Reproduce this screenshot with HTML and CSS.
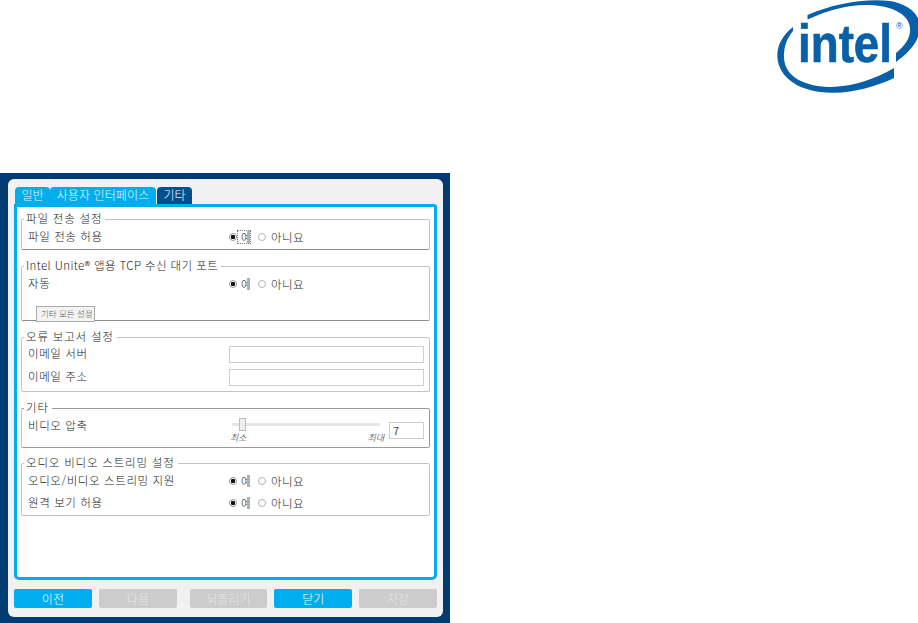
FILE: index.html
```html
<!DOCTYPE html>
<html lang="ko">
<head>
    <meta charset="UTF-8">
    <meta name="viewport" content="width=device-width, initial-scale=1.0">
    <title>Intel Unite</title>
    <link rel="stylesheet" href="styles.css">
</head>
<body>

<header class="top">
    <svg class="logo" width="148" height="110" viewBox="0 0 148 110">
        <path d="M37.5 15 C62 4 95 -2 120 1 C138 4 150 14 150 27 C150 40 140 52 126 62 L126 53 C135 46 141 37 140 28 C139 14 122 6 100 5 C80 4 58 10 37.5 19.5 Z"/>
        <path d="M23 27 C13 35 7 45 7.3 56 C8 78 30 92.7 62 92.7 C85 93 107 86 124 78 L124 68 C105 79 85 86 62 87 C35 87 15 77 14 58 C13.5 47 17 38 23 31 Z"/>
        <text class="logo-word" x="28" y="62" textLength="94" lengthAdjust="spacingAndGlyphs">intel</text>
        <text class="logo-reg" x="126" y="29">®</text>
    </svg>
</header>

<div class="window">
    <div class="panel">
        <div class="tabs">
            <div class="tab">일반</div>
            <div class="tab wide">사용자 인터페이스</div>
            <div class="tab active">기타</div>
        </div>

        <div class="content">
            <fieldset class="group group-file">
                <legend>파일 전송 설정</legend>
                <div class="row">
                    <label>파일 전송 허용</label>
                    <div class="choice">
                        <input type="radio" name="r1" checked><span class="yes focused">예</span>
                        <input type="radio" name="r1"><span>아니요</span>
                    </div>
                </div>
            </fieldset>

            <fieldset class="group group-port">
                <legend>Intel Unite® 앱용 TCP 수신 대기 포트</legend>
                <div class="row">
                    <label>자동</label>
                    <div class="choice">
                        <input type="radio" name="r2" checked><span class="yes">예</span>
                        <input type="radio" name="r2"><span>아니요</span>
                    </div>
                </div>
                <div class="tooltip">기타 모든 설정</div>
            </fieldset>

            <fieldset class="group group-report">
                <legend>오류 보고서 설정</legend>
                <div class="row">
                    <label>이메일 서버</label>
                    <input class="field" type="text">
                </div>
                <div class="row">
                    <label>이메일 주소</label>
                    <input class="field" type="text">
                </div>
            </fieldset>

            <fieldset class="group group-other">
                <legend>기타</legend>
                <div class="row">
                    <label>비디오 압축</label>
                    <div class="slider-box">
                        <div class="slider">
                            <input type="range" min="0" max="100" value="5">
                            <div class="slider-labels"><span>최소</span><span>최대</span></div>
                        </div>
                        <input class="field small" type="text" value="7">
                    </div>
                </div>
            </fieldset>

            <fieldset class="group group-stream">
                <legend>오디오 비디오 스트리밍 설정</legend>
                <div class="row">
                    <label>오디오/비디오 스트리밍 지원</label>
                    <div class="choice">
                        <input type="radio" name="r3" checked><span class="yes">예</span>
                        <input type="radio" name="r3"><span>아니요</span>
                    </div>
                </div>
                <div class="row">
                    <label>원격 보기 허용</label>
                    <div class="choice">
                        <input type="radio" name="r4" checked><span class="yes">예</span>
                        <input type="radio" name="r4"><span>아니요</span>
                    </div>
                </div>
            </fieldset>
        </div>

        <div class="buttons">
            <button class="btn on">이전</button>
            <button class="btn">다음</button>
            <button class="btn apart">되돌리기</button>
            <button class="btn on">닫기</button>
            <button class="btn">저장</button>
        </div>
    </div>
</div>

</body>
</html>
```

FILE: styles.css
```css
body {
    margin: 0;
    padding: 0;
    background-color: #fff;
    font-family: "Noto Sans CJK KR", "Noto Sans", sans-serif;
    font-size: 11px;
    font-weight: 300;
    color: #222;
    overflow: hidden;
}
.top {
    height: 173px;
    display: flex;
    justify-content: flex-end;
}
.logo {
    fill: #0860a8;
    overflow: hidden;
}
.logo-word {
    font-family: "Liberation Sans", sans-serif;
    font-weight: bold;
    font-size: 54px;
    stroke: #0860a8;
    stroke-width: 0.7px;
}
.logo-reg {
    font-family: "Liberation Sans", sans-serif;
    font-size: 9px;
}
.window {
    width: 450px;
    height: 450px;
    box-sizing: border-box;
    padding: 6px 7px 6px 8px;
    background-color: #003c71;
}
.panel {
    height: 438px;
    box-sizing: border-box;
    padding: 8px 6px 0;
    background-color: #f1f1f1;
    border-radius: 6px;
}
.tabs {
    display: flex;
    height: 17px;
    padding-left: 1px;
}
.tab {
    width: 35px;
    text-align: center;
    background-color: #00aeef;
    color: #e8f8ff;
    border-radius: 4px 4px 0 0;
    font-size: 12px;
    line-height: 16px;
}
.tab.wide {
    width: 106px;
    letter-spacing: 0.1px;
}
.tab.active {
    margin-left: 1px;
    background-color: #004f8f;
    color: #fff;
}
.content {
    height: 376px;
    box-sizing: border-box;
    padding: 5px 4px 0;
    background-color: #fff;
    border: 3px solid #00aeef;
    border-radius: 0 3px 5px 5px;
}
.group {
    margin: 0 0 9px;
    padding: 0;
    box-sizing: border-box;
    position: relative;
    border: 1px solid #c4c4c4;
    border-radius: 2px;
}
.group legend {
    margin-left: 2px;
    padding: 0 3px 2px 2px;
    line-height: 12px;
    font-size: 11.5px;
    letter-spacing: 0.8px;
}
.group-file { height: 38px; border-bottom-color: #8e8e8e; }
.group-port { height: 62px; border-bottom-color: #8e8e8e; }
.group-port legend { letter-spacing: 0.4px; }
.group-report { height: 62px; margin-bottom: 9px; }
.group-other { height: 47px; margin-bottom: 8px; border-color: #999 #999 #999 #c4c4c4; }
.group-stream { height: 60px; }
.row {
    display: flex;
    align-items: center;
    height: 22px;
    padding-left: 6px;
}
.group-report .row {
    margin-top: -1px;
}
.group-report .row + .row {
    margin-top: 1px;
}
.row label {
    width: 201px;
    padding-bottom: 2px;
    font-size: 11.5px;
    letter-spacing: 0.6px;
}
.choice {
    display: flex;
    align-items: center;
    font-size: 11.5px;
    letter-spacing: 0.4px;
}
.choice span {
    padding-bottom: 1px;
}
.choice input {
    appearance: none;
    width: 8px;
    height: 8px;
    margin: 0 5px 0 0;
    border: 1px solid #b4b4b4;
    border-radius: 50%;
    background-color: #fff;
    box-sizing: border-box;
}
.choice input:checked {
    margin-right: 1px;
    background: radial-gradient(circle, #111 0 2px, #fff 2.5px);
    border-color: #999;
}
.choice .yes {
    width: 6px;
    padding: 0 0 0 3px;
    margin: 0 8px 1px 0;
    overflow: hidden;
    border-right: 3px solid #b0b0b0;
    line-height: 12px;
    letter-spacing: 0;
}
.yes.focused {
    outline: 1px dotted #777;
}
.field {
    width: 195px;
    height: 17px;
    margin: 0;
    padding: 0 3px;
    box-sizing: border-box;
    border: 1px solid #cfcfcf;
    font-family: inherit;
    font-size: 11px;
    color: #444;
}
.slider-box {
    display: flex;
    align-items: flex-start;
    height: 22px;
}
.slider {
    width: 160px;
}
.slider input {
    appearance: none;
    display: block;
    width: 148px;
    height: 13px;
    margin: 3px 0 0 3px;
    background: linear-gradient(#e6e6e6, #e6e6e6) center / 100% 3px no-repeat;
}
.slider input::-webkit-slider-thumb {
    appearance: none;
    width: 7px;
    height: 13px;
    box-sizing: border-box;
    background-color: #eeeeee;
    border: 1px solid #bdbdbd;
}
.slider-labels {
    display: flex;
    justify-content: space-between;
    margin-top: 1px;
    padding: 0 5px 0 1px;
    font-size: 9px;
    font-style: italic;
    line-height: 12px;
}
.field.small {
    width: 35px;
    margin-top: 7px;
    line-height: 13px;
    padding-bottom: 2px;
}
.tooltip {
    position: absolute;
    left: 14px;
    bottom: -2px;
    padding: 0 4px;
    height: 16px;
    width: 59px;
    box-sizing: border-box;
    white-space: nowrap;
    background-color: #f3f3f3;
    border: 1px solid #aaa;
    font-size: 8.5px;
    line-height: 13px;
    color: #555;
}
.buttons {
    display: flex;
    gap: 7px;
    margin-top: 9px;
}
.btn {
    width: 78px;
    height: 19px;
    padding: 0;
    border: none;
    border-radius: 2px;
    background-color: #cccccc;
    color: #e6e6e6;
    font-family: inherit;
    font-size: 12px;
    font-weight: 300;
}
.btn.on {
    background-color: #00aeef;
    color: #fff;
}
.btn.apart {
    margin-left: 6px;
}
```
